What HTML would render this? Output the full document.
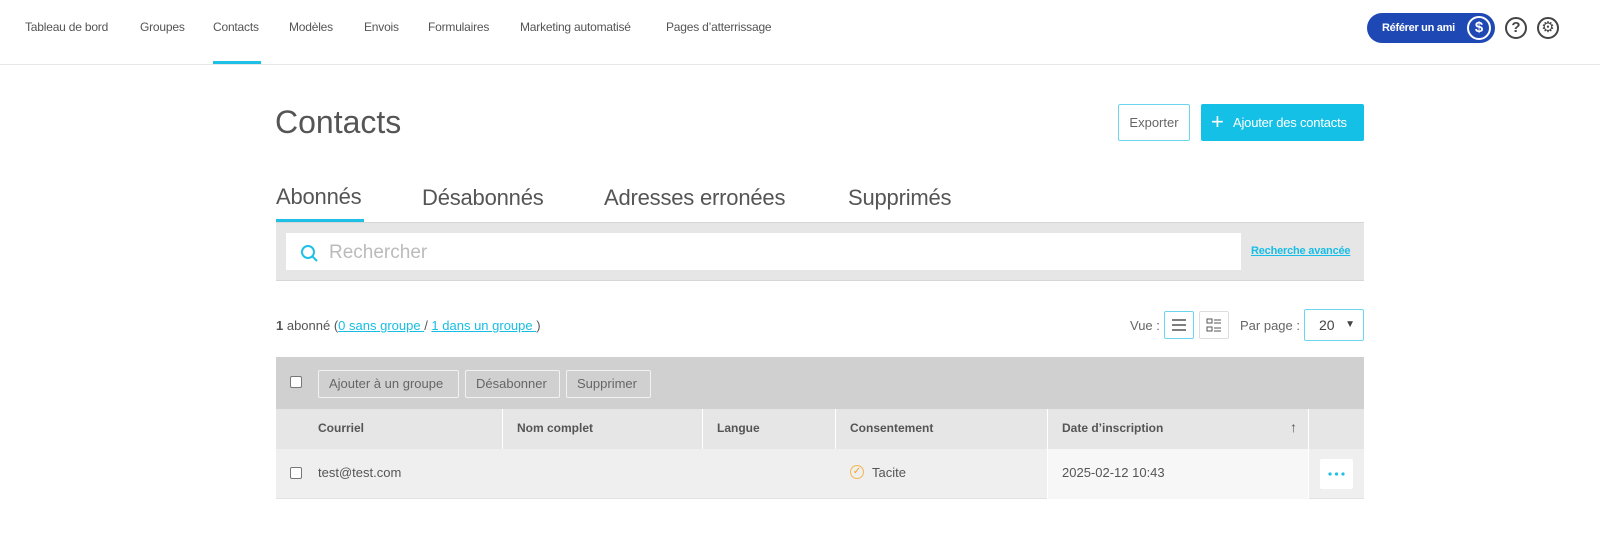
<!DOCTYPE html>
<html><head><meta charset="utf-8"><style>
*{box-sizing:border-box;margin:0;padding:0}
body{width:1600px;height:534px;background:#fff;font-family:"Liberation Sans",Arial,sans-serif;color:#555;position:relative;overflow:hidden}
.a{position:absolute;white-space:nowrap}
.nav{top:20px;font-size:12px;color:#555;letter-spacing:-0.2px}
.hdr{top:421px;font-size:12px;font-weight:bold;color:#555}
.btn{position:absolute;top:370px;height:28px;border:1px solid #f2f2f2;border-radius:2px;font-size:13px;color:#666;line-height:26px;padding:0 10px;background:#d0d0d0}
.cb{position:absolute;width:12px;height:12px;border:1px solid #777;border-radius:2px;background:#fff}
.sep{position:absolute;width:1px;background:#fff}
.tab{top:185px;font-size:22px;color:#555;letter-spacing:-0.2px}
a{color:#17bde5;text-decoration:underline}
</style></head><body>
<div class="a nav" style="left:25px">Tableau de bord</div>
<div class="a nav" style="left:140px">Groupes</div>
<div class="a nav" style="left:213px">Contacts</div>
<div class="a nav" style="left:289px">Modèles</div>
<div class="a nav" style="left:364px">Envois</div>
<div class="a nav" style="left:428px">Formulaires</div>
<div class="a nav" style="left:520px">Marketing automatisé</div>
<div class="a nav" style="left:666px">Pages d’atterrissage</div>
<div class="a" style="left:213px;top:61px;width:48px;height:3px;background:#1ec0e6"></div>
<div class="a" style="left:0;top:64px;width:1600px;height:1px;background:#e8e8e8"></div>
<div class="a" style="left:1367px;top:13px;width:128px;height:30px;border-radius:15px;background:#1e48b4;color:#fff;font-size:11px;font-weight:bold;line-height:30px;padding-left:15px;letter-spacing:-0.3px">Référer un ami
<span style="position:absolute;right:4px;top:3px;width:24px;height:24px;border:2px solid #fff;border-radius:50%;font-size:15px;line-height:20px;text-align:center;letter-spacing:0">$</span></div>
<div class="a" style="left:1505px;top:17px;width:22px;height:22px;border:2px solid #444;border-radius:50%;font-size:15px;font-weight:bold;color:#444;line-height:18px;text-align:center">?</div>
<div class="a" style="left:1537px;top:17px;width:22px;height:22px;border:2px solid #444;border-radius:50%;font-size:15px;color:#444;line-height:18px;text-align:center">⚙</div>

<div class="a" style="left:275px;top:104px;font-size:32px;color:#555">Contacts</div>
<div class="a" style="left:1118px;top:104px;width:72px;height:37px;border:1px solid #6dd6ef;border-radius:2px;font-size:13px;color:#666;line-height:35px;text-align:center">Exporter</div>
<div class="a" style="left:1201px;top:104px;width:163px;height:37px;background:#14c0e6;border-radius:2px;color:#fff;font-size:13px;line-height:37px;padding-left:32px;letter-spacing:-0.2px"><span style="position:absolute;left:10px;top:-1px;font-size:22px">+</span>Ajouter des contacts</div>

<div class="a tab" style="left:276px;top:184px">Abonnés</div>
<div class="a tab" style="left:422px">Désabonnés</div>
<div class="a tab" style="left:604px">Adresses erronées</div>
<div class="a tab" style="left:848px">Supprimés</div>
<div class="a" style="left:276px;top:219px;width:88px;height:3px;background:#1ec0e6"></div>
<div class="a" style="left:276px;top:222px;width:1088px;height:59px;background:#e6e6e6;border-top:1px solid #d6d6d6;border-bottom:1px solid #d6d6d6"></div>
<div class="a" style="left:286px;top:233px;width:955px;height:37px;background:#fff"></div>
<svg class="a" style="left:300px;top:244px" width="20" height="20" viewBox="0 0 20 20"><circle cx="8" cy="8" r="6" fill="none" stroke="#1ec0e6" stroke-width="2"/><path d="M12.5 12.5L17 17" stroke="#1ec0e6" stroke-width="2"/></svg>
<div class="a" style="left:329px;top:242px;font-size:19px;color:#bbb">Rechercher</div>
<div class="a" style="left:1251px;top:245px;font-size:11px;font-weight:bold;letter-spacing:-0.2px"><a>Recherche avancée</a></div>

<div class="a" style="left:276px;top:318px;font-size:13px;color:#555"><b>1</b> abonné (<a>0 sans groupe </a>/ <a>1 dans un groupe </a>)</div>
<div class="a" style="left:1130px;top:318px;font-size:13px;color:#666">Vue :</div>
<div class="a" style="left:1164px;top:311px;width:30px;height:28px;border:1px solid #6dd6ef;border-radius:2px"><svg width="28" height="26"><path d="M7 8h14M7 13h14M7 18h14" stroke="#555" stroke-width="1.5"/></svg></div>
<div class="a" style="left:1199px;top:311px;width:30px;height:28px;border:1px solid #ddd;border-radius:2px"><svg width="28" height="26"><rect x="7" y="7" width="5" height="4" fill="none" stroke="#555"/><rect x="7" y="15" width="5" height="4" fill="none" stroke="#555"/><path d="M14 8h7M14 11h7M14 16h7M14 19h7" stroke="#555"/></svg></div>
<div class="a" style="left:1240px;top:318px;font-size:13px;color:#666">Par page :</div>
<div class="a" style="left:1304px;top:309px;width:60px;height:32px;border:1px solid #6dd6ef;border-radius:2px;font-size:14px;color:#444;line-height:30px;padding-left:14px">20<span style="position:absolute;right:8px;font-size:10px">▼</span></div>

<div class="a" style="left:276px;top:357px;width:1088px;height:52px;background:#d0d0d0"></div>
<div class="cb" style="left:290px;top:376px"></div>
<div class="btn" style="left:318px;width:141px">Ajouter à un groupe</div>
<div class="btn" style="left:465px;width:95px">Désabonner</div>
<div class="btn" style="left:566px;width:85px">Supprimer</div>

<div class="a" style="left:276px;top:409px;width:1088px;height:40px;background:#e6e6e6"></div>
<div class="a" style="left:276px;top:449px;width:1088px;height:50px;background:#efefef;border-bottom:1px solid #e2e2e2"></div>
<div class="a" style="left:1048px;top:449px;width:260px;height:50px;background:#f7f7f7"></div>
<div class="sep" style="left:502px;top:409px;height:40px"></div>
<div class="sep" style="left:702px;top:409px;height:40px"></div>
<div class="sep" style="left:835px;top:409px;height:40px"></div>
<div class="sep" style="left:1047px;top:409px;height:90px"></div>
<div class="sep" style="left:1308px;top:409px;height:90px"></div>
<div class="a hdr" style="left:318px">Courriel</div>
<div class="a hdr" style="left:517px">Nom complet</div>
<div class="a hdr" style="left:717px">Langue</div>
<div class="a hdr" style="left:850px">Consentement</div>
<div class="a hdr" style="left:1062px">Date d’inscription</div>
<div class="a hdr" style="left:1290px;font-size:14px;top:419px">↑</div>
<div class="cb" style="left:290px;top:467px"></div>
<div class="a" style="left:318px;top:465px;font-size:13px;color:#555">test@test.com</div>
<div class="a" style="left:850px;top:465px;width:14px;height:14px;border:1.5px solid #f0b650;border-radius:50%;color:#f0a020;font-size:10px;line-height:11px;text-align:center">✓</div>
<div class="a" style="left:872px;top:465px;font-size:13px;color:#555">Tacite</div>
<div class="a" style="left:1062px;top:465px;font-size:13px;color:#555">2025-02-12 10:43</div>
<div class="a" style="left:1320px;top:459px;width:33px;height:30px;background:#fff;border-radius:2px">
<svg width="33" height="30"><circle cx="10" cy="15" r="1.6" fill="#1ec0e6"/><circle cx="16.5" cy="15" r="1.6" fill="#1ec0e6"/><circle cx="23" cy="15" r="1.6" fill="#1ec0e6"/></svg></div>
</body></html>
